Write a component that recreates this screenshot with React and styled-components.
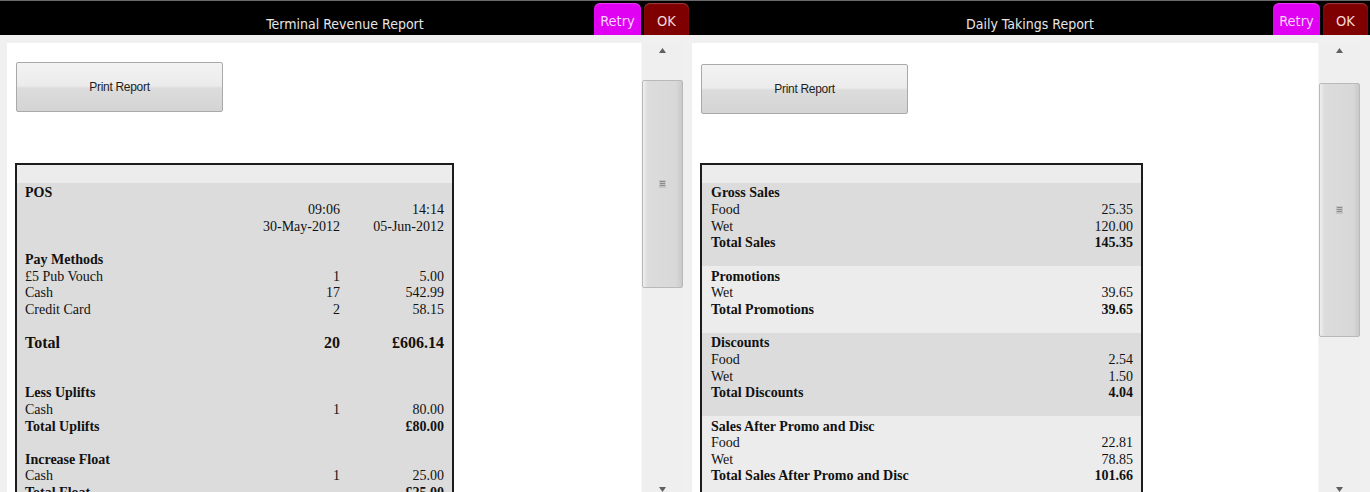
import React from 'react';
import styled, { createGlobalStyle } from 'styled-components';

const GlobalStyle = createGlobalStyle`
  html, body {
    margin: 0;
    padding: 0;
    background: #f0f0f0;
    overflow: hidden;
  }
`;

const revenueRows = [
  { label: 'POS', bold: true },
  { b: '09:06', c: '14:14' },
  { b: '30-May-2012', c: '05-Jun-2012' },
  {},
  { label: 'Pay Methods', bold: true },
  { label: '£5 Pub Vouch', b: '1', c: '5.00' },
  { label: 'Cash', b: '17', c: '542.99' },
  { label: 'Credit Card', b: '2', c: '58.15' },
  {},
  { label: 'Total', b: '20', c: '£606.14', bold: true, big: true },
  {},
  {},
  { label: 'Less Uplifts', bold: true },
  { label: 'Cash', b: '1', c: '80.00' },
  { label: 'Total Uplifts', c: '£80.00', bold: true },
  {},
  { label: 'Increase Float', bold: true },
  { label: 'Cash', b: '1', c: '25.00' },
  { label: 'Total Float', c: '£25.00', bold: true },
];

const takingsSections = [
  {
    rows: [
      { label: 'Gross Sales', bold: true },
      { label: 'Food', c: '25.35' },
      { label: 'Wet', c: '120.00' },
      { label: 'Total Sales', c: '145.35', bold: true },
    ],
  },
  {
    rows: [
      { label: 'Promotions', bold: true },
      { label: 'Wet', c: '39.65' },
      { label: 'Total Promotions', c: '39.65', bold: true },
    ],
  },
  {
    rows: [
      { label: 'Discounts', bold: true },
      { label: 'Food', c: '2.54' },
      { label: 'Wet', c: '1.50' },
      { label: 'Total Discounts', c: '4.04', bold: true },
    ],
  },
  {
    rows: [
      { label: 'Sales After Promo and Disc', bold: true },
      { label: 'Food', c: '22.81' },
      { label: 'Wet', c: '78.85' },
      { label: 'Total Sales After Promo and Disc', c: '101.66', bold: true },
    ],
  },
];

const Arrow = ({ down }) => (
  <svg width="7" height="5" viewBox="0 0 7 5">
    <path d={down ? 'M0 0 L7 0 L3.5 5 Z' : 'M0 5 L7 5 L3.5 0 Z'} fill="#606060" />
  </svg>
);

const Grip = () => (
  <svg width="7" height="8" viewBox="0 0 7 8">
    <rect x="0" y="0" width="7" height="8" fill="#c4c4c4" />
    <path d="M1 1.5 H6 M1 3.5 H6 M1 5.5 H6" stroke="#8a8a8a" strokeWidth="1" />
  </svg>
);

const ScrollBar = ({ thumbTop, thumbHeight }) => (
  <Track>
    <ArrowBox $height={thumbTop} $align="flex-start" $pad="5px 0 0">
      <Arrow />
    </ArrowBox>
    <Thumb $height={thumbHeight}>
      <Grip />
    </Thumb>
    <TrackRest />
    <ArrowBox $height={6} $align="flex-end" $pad="0">
      <Arrow down />
    </ArrowBox>
  </Track>
);

const ReportPanel = ({ title, width, padLeft, viewWidth, btnPad, children, thumbTop, thumbHeight }) => (
  <Panel $width={width}>
    <TitleBar>
      <span />
      <Title>{title}</Title>
      <Buttons $pad={btnPad}>
        <TabButton $bg="#e000f2" $fg="#f6d6fb" $w={47}>Retry</TabButton>
        <TabButton $bg="#7e0000" $fg="#f2d8d8" $w={45}>OK</TabButton>
      </Buttons>
    </TitleBar>
    <Body $padLeft={padLeft}>
      <Viewport $width={viewWidth}>{children}</Viewport>
      <ScrollBar thumbTop={thumbTop} thumbHeight={thumbHeight} />
    </Body>
  </Panel>
);

const Cells = ({ row, three }) => (
  <Row $bold={row.bold} $big={row.big}>
    <Label>{row.label || ''}</Label>
    {three && <Num $w={110}>{row.b || ''}</Num>}
    <Num $w={three ? 104 : 120}>{row.c || ''}</Num>
  </Row>
);

export default function App() {
  return (
    <>
      <GlobalStyle />
      <Screen>
        <ReportPanel
          title="Terminal Revenue Report"
          width={690}
          padLeft={7}
          viewWidth={634}
          btnPad={1}
          thumbTop={37}
          thumbHeight={208}
        >
          <PrintButton $top={19}>Print Report</PrintButton>
          <ReportBox $width={439} $padLeft={8} $top={51}>
            <TopBand />
            <Section $bg="#dcdcdc">
              {revenueRows.map((r, i) => (
                <Cells key={i} row={r} three />
              ))}
            </Section>
          </ReportBox>
        </ReportPanel>
        <ReportPanel
          title="Daily Takings Report"
          width={680}
          padLeft={2}
          viewWidth={626}
          btnPad={2}
          thumbTop={40}
          thumbHeight={254}
        >
          <PrintButton $top={21}>Print Report</PrintButton>
          <ReportBox $width={443} $padLeft={9} $top={49}>
            <TopBand />
            {takingsSections.map((s, i) => (
              <Section key={i} $bg={i % 2 === 0 ? '#dcdcdc' : '#ececec'}>
                {s.rows.map((r, j) => (
                  <Cells key={j} row={r} />
                ))}
                <Row />
              </Section>
            ))}
          </ReportBox>
        </ReportPanel>
      </Screen>
    </>
  );
}

const Screen = styled.div`
  display: flex;
  height: 492px;
  overflow: hidden;
  background: #f0f0f0;
`;

const Panel = styled.div`
  width: ${(p) => p.$width}px;
  flex: none;
  display: flex;
  flex-direction: column;
  height: 492px;
`;

const TitleBar = styled.div`
  height: 34px;
  border-top: 1px solid #6a6a6a;
  background: #000;
  display: grid;
  grid-template-columns: 1fr auto 1fr;
  align-items: end;
`;

const Title = styled.div`
  font-family: 'Liberation Sans Narrow', 'DejaVu Sans Condensed', sans-serif;
  font-size: 14px;
  color: #e6e6e6;
  padding-bottom: 3px;
  white-space: nowrap;
`;

const Buttons = styled.div`
  justify-self: end;
  display: flex;
  gap: 3px;
  padding-right: ${(p) => p.$pad}px;
`;

const TabButton = styled.div`
  width: ${(p) => p.$w}px;
  height: 32px;
  box-sizing: border-box;
  background: ${(p) => p.$bg};
  color: ${(p) => p.$fg};
  border-radius: 6px 6px 0 0;
  display: flex;
  align-items: center;
  justify-content: center;
  padding-top: 4px;
  font-family: 'Liberation Sans Narrow', 'DejaVu Sans Condensed', sans-serif;
  font-size: 14.5px;
  box-shadow: inset 0 1px 1px rgba(255, 255, 255, 0.25);
`;

const Body = styled.div`
  flex: 1;
  display: flex;
  padding-top: 8px;
  padding-left: ${(p) => p.$padLeft}px;
  min-height: 0;
`;

const Viewport = styled.div`
  width: ${(p) => p.$width}px;
  flex: none;
  background: #fff;
  overflow: hidden;
  padding-left: 9px;
  box-sizing: border-box;
`;

const Track = styled.div`
  width: 42px;
  flex: none;
  display: flex;
  flex-direction: column;
  background: #efefef;
  border-left: 1px solid #f6f6f6;
  box-sizing: border-box;
`;

const ArrowBox = styled.div`
  height: ${(p) => p.$height}px;
  flex: none;
  box-sizing: border-box;
  padding: ${(p) => p.$pad};
  display: flex;
  justify-content: center;
  align-items: ${(p) => p.$align};
`;

const Thumb = styled.div`
  height: ${(p) => p.$height}px;
  flex: none;
  box-sizing: border-box;
  border: 1px solid #b9b9b9;
  border-radius: 2px;
  background: linear-gradient(90deg, #eeeeee 0, #dcdcdc 12%, #d8d8d8 85%, #c9c9c9 100%);
  display: flex;
  align-items: center;
  justify-content: center;
`;

const TrackRest = styled.div`
  flex: 1;
`;

const PrintButton = styled.div`
  margin-top: ${(p) => p.$top}px;
  width: 207px;
  height: 50px;
  box-sizing: border-box;
  border: 1px solid #a9a9a9;
  border-radius: 2px;
  background: linear-gradient(180deg, #f3f3f3 0%, #ebebeb 48%, #dcdcdc 52%, #d4d4d4 100%);
  display: flex;
  align-items: center;
  justify-content: center;
  font-family: 'Liberation Sans', Arial, sans-serif;
  font-size: 12px;
  letter-spacing: -0.3px;
  color: #1e1e1e;
`;

const ReportBox = styled.div`
  margin-top: ${(p) => p.$top}px;
  margin-left: -1px;
  width: ${(p) => p.$width}px;
  box-sizing: border-box;
  border: 2px solid #1c1c1c;
  font-family: 'Liberation Serif', 'Times New Roman', serif;
  color: #111;
  --pad: ${(p) => p.$padLeft}px;
`;

const TopBand = styled.div`
  height: 18px;
  background: #ececec;
`;

const Section = styled.div`
  background: ${(p) => p.$bg};
  padding: 0 8px 0 var(--pad);
`;

const Row = styled.div`
  display: flex;
  height: 16.66px;
  box-sizing: border-box;
  padding-top: 4px;
  align-items: center;
  font-size: ${(p) => (p.$big ? 16 : 14)}px;
  font-weight: ${(p) => (p.$bold ? 700 : 400)};
  white-space: nowrap;
`;

const Label = styled.div`
  flex: 1;
`;

const Num = styled.div`
  width: ${(p) => p.$w}px;
  text-align: right;
`;
